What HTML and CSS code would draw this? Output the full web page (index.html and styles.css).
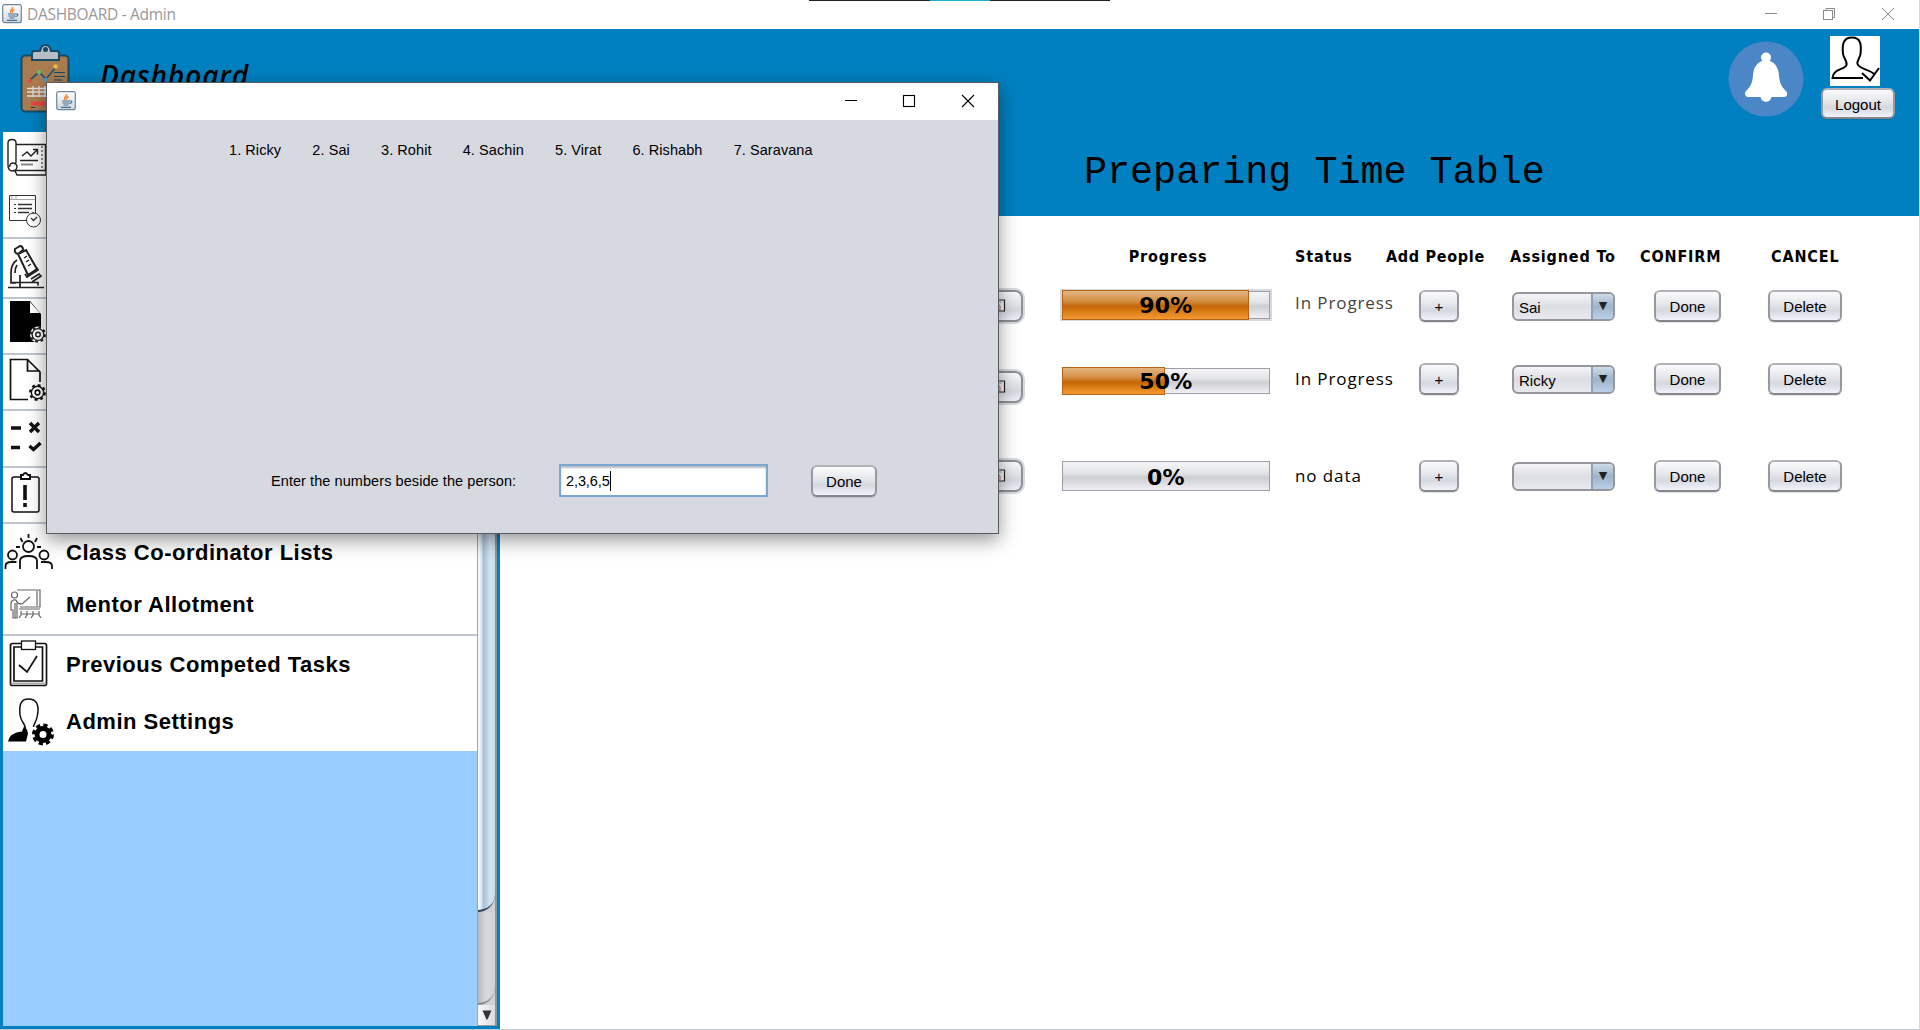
FILE: index.html
```html
<!DOCTYPE html>
<html lang="en">
<head>
<meta charset="utf-8">
<title>DASHBOARD - Admin</title>
<link rel="stylesheet" href="styles.css">
</head>
<body>
<svg class="defs" aria-hidden="true">
  <defs>
    <linearGradient id="cupbg" x1="0" y1="0" x2="0" y2="1"><stop offset="0" stop-color="#fff"/><stop offset="1" stop-color="#ccd5dc"/></linearGradient>
    <symbol id="java" viewBox="0 0 20 20">
      <rect x=".7" y=".7" width="18.6" height="18" rx="2" fill="url(#cupbg)" stroke="#6e8798" stroke-width="1.2"/>
      <path d="M10.5 3c1.200 2-3.500 3-1.500 6M12.500 5.500c-2 .8-2.500 1.600-1.500 3.200" fill="none" stroke="#ee8a38" stroke-width="1.500"/>
      <path d="M6 10h8M6.500 12h7M7.500 14h5M5 16.400h10M14 10c3-.2 2 2.500-.5 2.500" fill="none" stroke="#47718f" stroke-width="1.200"/>
    </symbol>
    <symbol id="gear" viewBox="-10 -10 20 20">
      <circle r="6.500" fill="none" stroke="currentColor" stroke-width="1.500"/>
      <circle r="7.800" fill="none" stroke="currentColor" stroke-width="2.200" stroke-dasharray="3 3.126"/>
      <circle r="2.500" fill="none" stroke="currentColor" stroke-width="1.600"/>
    </symbol>
    <symbol id="doc" viewBox="0 0 12 14">
      <path d="M0 1h10.500v11H0" fill="#f5f5f7" stroke="#222" stroke-width="1.200"/>
      <path d="M0 2h8v2H0z" fill="#b9cbe0"/>
      <path d="M1 5.500h4l1 1.500v4H1V7.500h2.500v2" fill="none" stroke="#e05050"/>
    </symbol>
  </defs>
</svg>

<div class="app">
  <header class="titlebar">
    <svg class="cup"><use href="#java"/></svg>
    <span class="app-title">DASHBOARD - Admin</span>
    <svg class="wincontrols" width="134" height="29" viewBox="1765 0 134 29" fill="none" stroke="#8a8a8a">
      <path d="M1765 13.500h12M1882 8l12 12M1894 8l-12 12M1826 10.500v-2h8.500v9h-2"/><rect x="1823.500" y="10.500" width="9" height="9"/>
    </svg>
    <div class="handle"><i></i></div>
  </header>

  <div class="banner">
    <svg class="clipboard" width="90" height="103" viewBox="0 29 90 103">
      <rect x="21.500" y="55.500" width="47" height="56" rx="4" fill="#a97c50" stroke="#164a66" stroke-width="2"/>
      <path d="M32 60v-7q0-2 3-2h5q1-6 5.500-6t5.500 6h5q3 0 3 2v7z" fill="#b8bcc4" stroke="#164a66" stroke-width="2"/>
      <circle cx="45.500" cy="49.500" r="2.500" fill="#164a66"/>
      <path d="m30 80 9-8 7 7 10-12" fill="none" stroke="#25566c" stroke-width="1.800"/>
      <circle cx="30" cy="80.500" r="2" fill="#ef4444"/><circle cx="39" cy="72" r="2.200" fill="#6bbf59"/><circle cx="46" cy="79.500" r="2" fill="#3a9be0"/><circle cx="55.500" cy="66.500" r="2.200" fill="#f5b942"/>
      <path d="M54 72.500h11M54 76.500h11M54 80h8" stroke="#164a66"/>
      <path d="M27 88.500h22M27 92h22M27 96h22M33 86v11M39 86v11M45 86v11" stroke="#ddd" stroke-width="1.300"/>
      <path d="M31 103.500h18" stroke="#ef4444" stroke-width="4"/><path d="M31 107.500h4" stroke="#333"/>
    </svg>
    <h1 class="brand">Dashboard</h1>
    <svg class="bell" width="76" height="76" viewBox="0 0 76 76">
      <circle cx="38" cy="38" r="37.500" fill="#4b86c6"/>
      <circle cx="38" cy="16.500" r="5" fill="#fff"/>
      <path d="M38 19c-9 1-12.500 8-13 15-.4 7-2 11-6.500 15.500-3 3-1 6.500 1.500 6.500h36c3 0 4.500-3.500 1.500-6.500C53 45 51.400 41 51 34c-.5-7-4-14-13-15zM32.500 55.500c.5 7 10.500 7 11 0z" fill="#fff"/>
    </svg>
    <div class="account">
      <svg width="50" height="50" viewBox="0 0 50 50">
        <path fill="#fff" d="M0 0h50v50H0z"/>
        <path d="M44 38c-3-4-15-5-16.500-10-1-3 2.500-6 3-10C31.500 9 31 1.500 22 1.500S12 9 13 18c.5 4 4.500 7 3.500 11C15 34 3.500 32 2.500 42H33M32 37l8 7.500L49 32" fill="none" stroke="#000" stroke-width="2"/>
      </svg>
      <button class="btn logout">Logout</button>
    </div>
  </div>

  <div class="workspace">
    <aside class="sidebar">
      <nav class="menu">
        <div class="item r1"><svg width="46" height="54" viewBox="3 132 46 54" fill="none" stroke="#222">
          <path d="M8 165v-22q0-3.500 4-3.500t4 3.500v20M8 165q0 6 4.500 6t4.500-5q-1-3-4-3t-3.500 4M16 144.500h29.500v26H13M15 171l2 4h29V146" stroke-width="1.400"/><path d="M42 146v24" stroke-dasharray="2 2"/><path d="m22 156 5-4 4 4 6-6M33 149.500h4.500v5M20 160.500h18" stroke-width="1.500"/><path d="M21 164.500h12" stroke="#888" stroke-width="2"/></svg></div>
        <div class="item r2 rule"><svg width="46" height="51" viewBox="3 186 46 51" fill="none" stroke="#333">
          <path d="M34 219.500H9.500v-25h26v18"/><path d="M10 198.500h25M12 195v4M16 195v4" stroke="#aaa"/><path d="M18 203.500h14M18 207.500h14M18 211.500h11" stroke-width="1.600"/><path d="M14 203.500h2M14 207.500h2M14 211.500h2"/><circle cx="33.500" cy="219" r="7" fill="#fff"/><path d="M31 217l2.500 2.500L37 216M33 211v2" stroke-width="1.300"/></svg></div>
        <div class="item r3 rule"><svg width="46" height="60" viewBox="3 238 46 60" fill="none" stroke="#222" stroke-width="1.700">
          <path d="m15 248 5-3q3 0 3 4l-5 4q-4-1-3-5zM18 253l8-4 11 19-9 6z" stroke-width="2"/><path d="m24 257 3-2M26 261l3-2M28 265l3-2" stroke-width="1.400"/><path d="M25 273l2 3 11-7-1-2M17 259q-6 4-6 13v10h5M17 264q-2 3-2 8M8 286.500h36M11 281.500h27v3M20 274v12M31 278l8-5 2 2-9 6"/></svg></div>
        <div class="item r4 rule"><svg width="46" height="55" viewBox="3 299 46 55">
          <path d="M10 301h20l11 13v28H10z"/><path d="M30 302v11h10z" fill="#fff"/><g color="#222"><circle cx="38" cy="334.500" r="8" fill="#fff"/><use href="#gear" x="29" y="325.500" width="18" height="18"/></g></svg></div>
        <div class="item r5 rule"><svg width="46" height="56" viewBox="3 354 46 56" fill="none" stroke="#111">
          <path d="M28 398.500H10.500v-40h17L40 371v10M27.500 358v12H40" stroke-width="1.700"/><use href="#gear" x="28" y="382" width="19" height="19" color="#111"/></svg></div>
        <div class="item r6 rule"><svg width="46" height="56" viewBox="3 410 46 56" fill="none" stroke="#111" stroke-width="3.400">
          <path d="M11 427h10M11 446.500h9M30 422l9 9M39 422l-9 9M29.500 445l4 3.500 7-6.500"/></svg></div>
        <div class="item r7 rule"><svg width="46" height="56" viewBox="3 467 46 56" fill="none" stroke="#111">
          <rect x="12" y="476" width="27" height="35" rx="2" stroke-width="1.500"/><path d="M21 478v-4h2q2-4 5 0h2v4z" fill="#fff" stroke-width="2"/><path d="M25 484v15M25 502v4" stroke-width="3.600"/></svg></div>
        <div class="item r8"><svg width="52" height="56" viewBox="3 523 52 56" fill="none" stroke="#111" stroke-width="1.800">
          <circle cx="28.500" cy="545.500" r="5.500"/><circle cx="12.500" cy="554" r="4.500"/><circle cx="44" cy="554" r="4.500"/><path d="M20 568v-8q0-5 8.500-5t8.500 5v8M5.500 568v-3q0-4 6-4h5M52 568v-3q0-4-6-4h-5M28.500 533v4M20.500 537l2 4M37 537l-2 4M16 546h4M37 546h4"/></svg><span>Class Co-ordinator Lists</span></div>
        <div class="item r9 rule"><svg width="52" height="56" viewBox="3 579 52 56" fill="none" stroke="#666" stroke-width="1.200">
          <path d="M17 590h23v17H20M37 591v15M19 609h21M30 597l-8 7q-5 0-6-4-4-1-5 3v7h2v8h4v-15M15 603v15M21 611v4l-2 3M21 614h18M27 611v4l-2 3M33 611v4l-2 3M39 611v4l2 3"/><circle cx="14.500" cy="595" r="3"/></svg><span>Mentor Allotment</span></div>
        <div class="item r10"><svg width="52" height="59" viewBox="3 635 52 59" fill="none" stroke="#111">
          <rect x="10.500" y="642.500" width="36" height="42" rx="2" stroke-width="1.700"/><path d="M14 646h28.500v34H14z" stroke-width="1.700"/><path d="M11 682.500h35" stroke="#aaa" stroke-width="2"/><rect x="21.500" y="640" width="14" height="8.500" fill="#fff" stroke-width="1.300"/><path d="m19 664 8 7 10-16" stroke-width="1.700"/></svg><span>Previous Competed Tasks</span></div>
        <div class="item r11"><svg width="52" height="57" viewBox="3 694 52 57">
          <path d="M25 729c2-5-4-7-5-15-1-11 1-16 8.500-16s11 5 9 16c-1 7-4 9-4 12" fill="none" stroke="#111" stroke-width="1.500"/><path d="M8 740.500q2-9 14-10l2-5 3 3 1 4-2 8z"/><circle cx="43" cy="733.500" r="6" fill="none" stroke="#000" stroke-width="5"/><circle cx="43" cy="733.500" r="9" fill="none" stroke="#000" stroke-width="4" stroke-dasharray="4.070 3"/></svg><span>Admin Settings</span></div>
      </nav>
      <div class="scrollbar">
        <div class="thumb"></div>
        <div class="track"></div>
        <div class="down"><svg width="10" height="10" viewBox="0 0 10 10"><path d="M.5.500h9l-4 9h-1z" fill="#333"/></svg></div>
      </div>
    </aside>

    <main class="content">
      <h2 class="heading">Preparing Time Table</h2>
      <section class="tasks">
        <div class="row labels"><span></span><span class="center">Progress</span><span>Status</span><span>Add People</span><span>Assigned To</span><span>CONFIRM</span><span class="cancel">CANCEL</span></div>
        <div class="row first">
          <div class="file"><svg width="12" height="14"><use href="#doc"/></svg></div>
          <div class="bar framed"><i style="width:91%"></i><b>90%</b></div>
          <span class="status soft">In Progress</span><button class="btn plus">+</button>
          <div class="combo"><span>Sai</span><i>▼</i></div><button class="btn done">Done</button><button class="btn delete">Delete</button>
        </div>
        <div class="row second">
          <div class="file low"><svg width="12" height="14"><use href="#doc"/></svg></div>
          <div class="bar short"><i style="width:50%"></i><b>50%</b></div>
          <span class="status">In Progress</span><button class="btn plus">+</button>
          <div class="combo"><span>Ricky</span><i>▼</i></div><button class="btn done">Done</button><button class="btn delete">Delete</button>
        </div>
        <div class="row third">
          <div class="file"><svg width="12" height="14"><use href="#doc"/></svg></div>
          <div class="bar"><b>0%</b></div>
          <span class="status">no data</span><button class="btn plus">+</button>
          <div class="combo"><span></span><i>▼</i></div><button class="btn done">Done</button><button class="btn delete">Delete</button>
        </div>
      </section>
    </main>
  </div>

  <div class="dialog">
    <div class="dialog-title">
      <svg class="cup"><use href="#java"/></svg>
      <svg width="130" height="36" viewBox="845 84 130 36" fill="none" stroke="#000" stroke-width="1.100">
        <path d="M845 100.500h12M962 95l12 12M974 95l-12 12"/><rect x="903.500" y="95.500" width="11" height="11"/>
      </svg>
    </div>
    <div class="dialog-body">
      <div class="people"><span>1. Ricky</span><span>2. Sai</span><span>3. Rohit</span><span>4. Sachin</span><span>5. Virat</span><span>6. Rishabh</span><span>7. Saravana</span></div>
      <div class="entry"><label>Enter the numbers beside the person:</label><div class="field"><span>2,3,6,5</span></div><button class="btn done">Done</button></div>
    </div>
  </div>
</div>
</body>
</html>
```

FILE: styles.css
```css
* { box-sizing: border-box; }
body { margin: 0; overflow: hidden; font-family: "Liberation Sans", Arial, sans-serif; color: #000; background: #fff; }
.defs { position: absolute; width: 0; height: 0; }
.app { position: relative; width: 1920px; height: 1030px; display: flex; flex-direction: column; border-right: 1px solid #d6d9df; border-bottom: 1px solid #c9ccd2; }

.titlebar { height: 29px; display: flex; align-items: center; padding-left: 2px; background: #fff; flex: none; }
.cup { width: 20px; height: 20px; flex: none; }
.titlebar .cup { margin-top: -2px; }
.app-title { margin-left: 5px; margin-top: -1px; font: 15.500px "Open Sans", sans-serif; color: #999; letter-spacing: -.3px; }
.wincontrols { margin-left: auto; margin-right: 20px; }
.handle { position: absolute; left: 809px; top: 0; width: 301px; height: 1px; background: #222; display: flex; justify-content: center; }
.handle i { width: 60px; background: #1ab5d6; }

.banner { height: 103px; background: #0080c0; display: flex; align-items: flex-start; flex: none; }
.brand { margin: 26px 0 0 10px; font: italic 600 28px "Open Sans", sans-serif; letter-spacing: .9px; line-height: 40px; }
.bell { margin: 12px 17px 0 auto; }
.account { width: 74px; margin: 7px 24px 0 0; display: flex; flex-direction: column; align-items: center; }
.account svg { margin-left: -6px; }

.btn { font: 15px "Liberation Sans", Arial, sans-serif; color: #000; height: 32px; padding: 1px 0 0; border: 2px solid #9699a0; border-top-color: #b0b2b7; border-bottom-color: #83868d; border-radius: 6px; background: linear-gradient(#fbfbfc, #e6e8ec 40%, #d5d8de 65%, #f1f2fb); box-shadow: 0 1px 1px rgba(0,0,0,.12); }
.logout { width: 74px; height: 31px; margin-top: 2px; }
.plus { width: 40px; }
.done { width: 67px; }
.delete { width: 74px; }

.workspace { flex: 1; display: flex; min-height: 0; }
.sidebar { width: 500px; padding: 0 3px 3px; background: #0080c0; display: flex; }
.menu { width: 474px; background: #99ccff; }
.item { display: flex; align-items: center; background: #fff; font-size: 22px; font-weight: 700; letter-spacing: .5px; }
.item svg { flex: none; display: block; }
.item span { margin-left: 11px; white-space: nowrap; }
.rule { border-bottom: 2px solid #bfc5cf; }
.item.rule svg { margin-bottom: -1px; }
.r1 { height: 54px; }
.r2 { height: 53px; }
.r3 { height: 60px; }
.r4 { height: 56px; }
.r5 { height: 56px; }
.r6 { height: 57px; }
.r7 { height: 56px; }
.r8 { height: 55px; padding-top: 3px; }
.r8 svg { margin-top: -3px; }
.r9 { height: 57px; }
.r9 span { margin-top: -4px; }
.r10 { height: 59px; }
.r10 span, .r11 span { margin-top: -2px; }
.r11 { height: 56px; }

.scrollbar { width: 20px; display: flex; flex-direction: column; background: #cfd1d6; border-left: 1px solid #9ba4b0; border-right: 2px solid #8d949c; border-bottom: 1px solid #999; }
.thumb { height: 780px; border-bottom: 2px solid #334b63; border-radius: 0 0 18px 0; background: linear-gradient(90deg, #fff, #dbe7f0 20%, #a9bfd4 32%, #d3e5f3 70%, #c9dcea); }
.track { flex: 1; background: linear-gradient(90deg, #b9bac0, #d8dae0 50%, #cfd1d6); border-radius: 0 0 18px 0; border-bottom: 2px solid #8a8b8f; }
.down { height: 20px; display: flex; align-items: center; justify-content: center; background: linear-gradient(90deg, #fafafa, #d8dade); }

.content { flex: 1; background: #fff; display: flex; flex-direction: column; }
.heading { margin: 0; height: 84px; padding: 15px 0 0 584px; background: #0080c0; font: 400 38.400px "Liberation Mono", monospace; line-height: 52px; white-space: pre; }
.tasks { display: flex; flex-direction: column; }
.row { display: grid; grid-template-columns: 525px 35px 212px 23px 92px 32px 92px 143px 114px 1fr; align-items: center; }
.row > :nth-child(1) { grid-column: 1; }
.row > :nth-child(2) { grid-column: 3; }
.row > :nth-child(3) { grid-column: 5 / 7; white-space: nowrap; }
.row > :nth-child(4) { grid-column: 7; }
.row > :nth-child(5) { grid-column: 8; }
.row > :nth-child(6) { grid-column: 9; }
.row > :nth-child(7) { grid-column: 10; }
.labels { height: 73px; padding-top: 7px; font: 700 16px "DejaVu Sans Condensed", "DejaVu Sans", sans-serif; font-stretch: condensed; letter-spacing: .85px; }
.labels > :nth-child(4) { margin-left: -33px; white-space: nowrap; letter-spacing: .7px; }
.labels > :nth-child(5) { margin-left: -1px; }
.labels > :nth-child(6) { margin-left: -14px; }
.center { text-align: center; padding-left: 4px; }
.cancel { margin-left: 3px; }
.first { height: 34px; }
.second { height: 112px; }
.third { height: 82px; }

.file { width: 30px; height: 32px; justify-self: end; border: 2px solid #8c8f96; border-left: 0; border-radius: 0 8px 8px 0; background: linear-gradient(#fafafb, #d5d8de 65%, #f1f2fb); box-shadow: 0 0 0 2px #d6d9df; margin-right: 2px; display: flex; align-items: center; padding-left: 1px; }
.low { position: relative; top: 8px; }
.bar { position: relative; height: 30px; width: 208px; margin-left: 2px; border: 1px solid #9b9ea6; background: linear-gradient(#f5f5f7, #e3e4e7 40%, #cdced1 55%, #f0f0f4); display: flex; align-items: center; justify-content: center; }
.framed { height: 28px; margin-top: -3px; box-shadow: 0 0 0 2px #d6d9df; }
.short { height: 26px; margin-top: 3px; }
.bar i { position: absolute; left: -1px; top: -2px; bottom: -2px; border: 1px solid #b5621b; background: linear-gradient(#e2b582, #d49045 35%, #c26604 55%, #d97c14 72%, #f49a33); }
.bar b { position: relative; left: 0; top: 1px; font: 700 22px "DejaVu Sans", sans-serif; letter-spacing: .2px; }
.status { font: 17px "Open Sans", sans-serif; letter-spacing: .9px; margin-top: -1px; }
.soft { color: #444; margin-top: -7px; }
.combo { width: 103px; height: 29px; margin-left: 1px; border: 2px solid #94979e; border-radius: 6px; background: linear-gradient(#f5f5f7, #dcdee3 50%, #e7e9ef); display: flex; overflow: hidden; font-size: 15px; line-height: 27px; }
.combo span { flex: 1; padding-left: 5px; }
.combo i { width: 20px; background: linear-gradient(#cfdbe7, #9db4ca 50%, #b9d0e6); box-shadow: 0 0 0 2px #8ca3b9; font: 11px "DejaVu Sans", sans-serif; line-height: 24px; text-align: center; color: #222; }

.dialog { position: absolute; left: 46px; top: 82px; width: 953px; height: 452px; border: 1px solid #555a60; background: #d6d9e0; box-shadow: 0 6px 18px rgba(0,0,0,.42); display: flex; flex-direction: column; }
.dialog-title { height: 37px; background: #fff; padding: 0 23px 0 9px; display: flex; align-items: center; justify-content: space-between; }
.dialog-title .cup { margin-top: -2px; }
.dialog-body { flex: 1; display: flex; flex-direction: column; justify-content: space-between; padding: 20px 0 36px 182px; font-size: 14.500px; letter-spacing: .07px; }
.people { display: flex; gap: 31.200px; line-height: 20px; }
.entry { display: flex; align-items: center; margin-left: 42px; }
.entry label { width: 288px; white-space: nowrap; }
.field { width: 209px; height: 33px; border: 2px solid #7ba7d0; box-shadow: inset 0 2px 2px #b9bcc2; background: #fff; padding: 5px 0 0 5px; letter-spacing: -.1px; }
.field span { display: inline-block; height: 20px; line-height: 20px; border-right: 1px solid #000; }
.entry .btn { margin-left: 43px; width: 66px; }
```
